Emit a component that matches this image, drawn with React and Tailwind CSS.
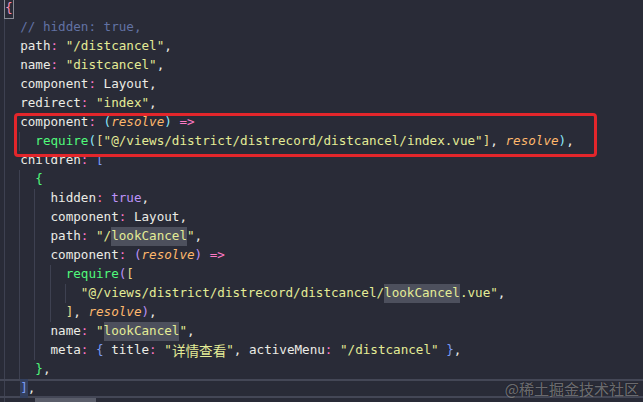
import React from 'react'

const K = 'text-[#ecece6]'
const P = 'text-[#ff79c6]'
const S = 'text-[#e4ec96]'
const C = 'text-[#6272a4]'
const B = 'text-[#bd93f9]'
const R = 'text-[#ffb86c] italic'
const G = 'text-[#50fa7b]'
const CY = 'text-[#8be9fd]'
const GO = 'text-[#e9d98a]'
const BL = 'text-[#7b9cf6]'
const HL = 'bg-[#4d505d]'
const CJK = "font-['Noto_Sans_CJK_SC',sans-serif] text-[13.6px] leading-[19px]"

// each line: [text, className][]
const lines = [
  [['{', 'text-[#ff8fb8] outline outline-1 outline-[#8a8c96]']],
  [['  // hidden: true,', C]],
  [['  path', K], [':', P], [' "/distcancel"', S], [',', K]],
  [['  name', K], [':', P], [' "distcancel"', S], [',', K]],
  [['  component', K], [':', P], [' Layout,', K]],
  [['  redirect', K], [':', P], [' "index"', S], [',', K]],
  [['  component', K], [':', P], [' ', K], ['(', CY], ['resolve', R], [')', CY], [' =>', P]],
  [['    require', G], ['(', CY], ['[', GO], ['"@/views/district/distrecord/distcancel/index.vue"', S], [']', GO], [', ', K], ['resolve', R], [')', CY], [',', K]],
  [['  children', K], [':', P], [' ', K], ['[', BL]],
  [['    {', G]],
  [['      hidden', K], [':', P], [' ', K], ['true', B], [',', K]],
  [['      component', K], [':', P], [' Layout,', K]],
  [['      path', K], [':', P], [' "/', S], ['lookCancel', S + ' ' + HL], ['"', S], [',', K]],
  [['      component', K], [':', P], [' ', K], ['(', B], ['resolve', R], [')', B], [' =>', P]],
  [['        require', G], ['(', B], ['[', GO]],
  [['          "@/views/district/distrecord/distcancel/', S], ['lookCancel', S + ' ' + HL], ['.vue"', S], [',', K]],
  [['        ', K], [']', GO], [', ', K], ['resolve', R], [')', B], [',', K]],
  [['      name', K], [':', P], [' "', S], ['lookCancel', S + ' ' + HL], ['"', S], [',', K]],
  [['      meta', K], [':', P], [' ', K], ['{', BL], [' title', K], [':', P], [' "', S], ['详情查看', S + ' ' + CJK], ['"', S], [', activeMenu', K], [':', P], [' "/distcancel"', S], [' ', K], ['}', BL], [',', K]],
  [['    }', G], [',', K]],
  [['  ', K], [']', BL + ' bg-[#34405e]'], [',', K]],
  [['    ', K], ['        ', 'bg-[#5a5d6a]']],
]

// indent guides: [col, firstLine, lastLine] (1-based)
const guides = [
  [0, 1, 22],
  [2, 8, 8],
  [2, 10, 20],
  [4, 11, 19],
  [6, 15, 17],
  [8, 16, 16],
]

const LH = 19
const CW = 7.6

export default function App() {
  return (
    <div className="relative w-[643px] h-[402px] overflow-hidden bg-[#292b37] font-['DejaVu_Sans_Mono','Noto_Sans_CJK_SC',monospace]">
      {/* indent guides */}
      {guides.map(([col, a, b], i) => (
        <div
          key={i}
          className="absolute w-px bg-[#3e4151]"
          style={{ left: 4 + col * CW, top: -1 + (a - 1) * LH, height: (b - a + 1) * LH }}
        />
      ))}

      {/* code */}
      <div className="relative flex flex-col pl-[5px] mt-[-1px] text-[12.6px]">
        {lines.map((toks, i) => (
          <div
            key={i}
            className={
              i === 20
                ? 'h-[19px] flex items-center whitespace-pre border-y-2 border-[#444756] -mx-[5px] px-[5px]'
                : 'h-[19px] flex items-center whitespace-pre'
            }
          >
            {toks.map(([t, c], j) => (
              <span key={j} className={c}>
                {t}
              </span>
            ))}
          </div>
        ))}
      </div>

      {/* annotation box */}
      <div className="absolute left-[14px] top-[113px] w-[583px] h-[44px] border-[3px] border-[#e3262b] rounded-[4px]" />

      {/* watermark */}
      <div className="absolute right-[4px] top-[380px] whitespace-nowrap text-[15px] leading-[18px] text-white/40 font-['Noto_Sans_CJK_SC',sans-serif] [text-shadow:0_0_1px_rgba(0,0,0,0.7)]">
        @稀土掘金技术社区
      </div>
    </div>
  )
}
